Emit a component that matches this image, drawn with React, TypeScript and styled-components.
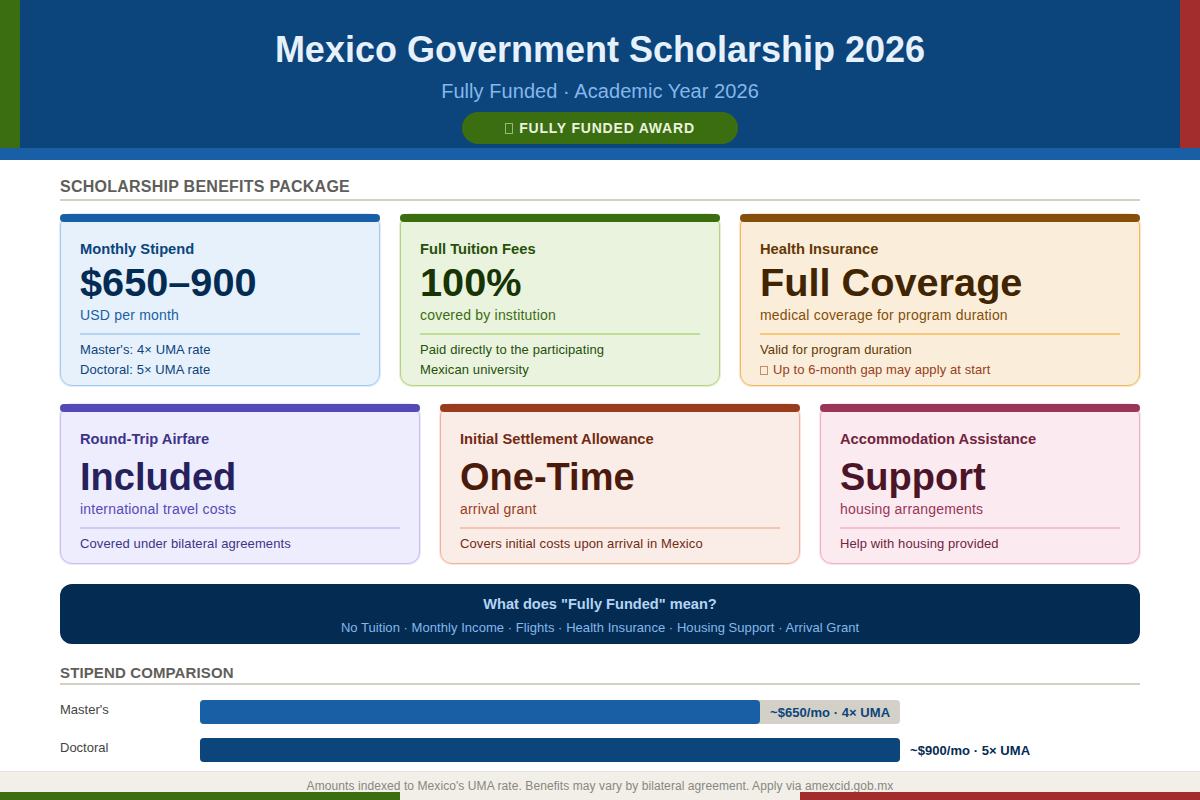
import React from "react";
import styled, { createGlobalStyle } from "styled-components";

const GlobalStyle = createGlobalStyle`
  html, body {
    margin: 0;
    padding: 0;
    background: #ffffff;
  }
  * {
    box-sizing: border-box;
  }
`;

const Page = styled.div`
  position: relative;
  width: 1200px;
  height: 800px;
  overflow: hidden;
  display: flex;
  flex-direction: column;
  background: #ffffff;
  font-family: "Liberation Sans", Arial, sans-serif;
`;

const Header = styled.header`
  display: flex;
  height: 160px;
  flex: none;
  border-bottom: 12px solid #185fa5;
  background: #0c447c;
`;

const FlagStripe = styled.div<{ $color: string }>`
  width: 20px;
  flex: none;
  background: ${props => props.$color};
`;

const HeaderBody = styled.div`
  flex: 1;
  display: flex;
  flex-direction: column;
  align-items: center;
  padding-top: 29px;
`;

const Title = styled.h1`
  margin: 0;
  font-size: 36px;
  line-height: 42px;
  font-weight: 700;
  color: #e6f1fb;
`;

const Subtitle = styled.div`
  margin-top: 6px;
  font-size: 20px;
  line-height: 28px;
  letter-spacing: 0.06px;
  color: #85b7eb;
`;

const AwardPill = styled.div`
  margin-top: 7px;
  width: 276px;
  height: 32px;
  border-radius: 16px;
  background: #3b6d11;
  color: #eaf3de;
  font-size: 14px;
  font-weight: 700;
  letter-spacing: 0.8px;
  display: flex;
  align-items: center;
  justify-content: center;
  gap: 6px;
`;

const MissingGlyph = styled.span<{ $width: number; $height: number }>`
  flex: none;
  display: inline-block;
  width: ${props => props.$width}px;
  height: ${props => props.$height}px;
  border: 1px solid currentColor;
  opacity: 0.55;
`;

const Main = styled.main`
  flex: 1;
  display: flex;
  flex-direction: column;
  padding: 18px 60px 0;
`;

const SectionTitle = styled.h2`
  margin: 0;
  height: 23px;
  border-bottom: 2px solid #d3d1c7;
  font-size: 16px;
  line-height: 18px;
  font-weight: 700;
  letter-spacing: 0.25px;
  text-transform: uppercase;
  color: #5f5e5a;
`;

const CardRow = styled.div<{ $columns: string; $height: number; $top: number }>`
  display: grid;
  grid-template-columns: ${props => props.$columns};
  gap: 20px;
  height: ${props => props.$height}px;
  margin-top: ${props => props.$top}px;
`;

type Tone = {
  bg: string;
  border: string;
  bar: string;
  label: string;
  value: string;
  unit: string;
  rule: string;
  note: string;
};

const blue: Tone = { bg: "#e6f1fb", border: "#a4c9f0", bar: "#185fa5", label: "#0c447c", value: "#042c53", unit: "#185fa5", rule: "#b5d4f4", note: "#0c447c" };
const green: Tone = { bg: "#eaf3de", border: "#b1d382", bar: "#3b6d11", label: "#27500a", value: "#173404", unit: "#3b6d11", rule: "#c0dd97", note: "#27500a" };
const amber: Tone = { bg: "#faeeda", border: "#f3b75d", bar: "#854f0b", label: "#633806", value: "#412402", unit: "#854f0b", rule: "#fac775", note: "#633806" };
const purple: Tone = { bg: "#eeedfe", border: "#c3bff1", bar: "#534ab7", label: "#3c3489", value: "#26215c", unit: "#534ab7", rule: "#cecbf6", note: "#3c3489" };
const coral: Tone = { bg: "#faece7", border: "#f4b29c", bar: "#993c1d", label: "#712b13", value: "#4a1b0c", unit: "#993c1d", rule: "#f5c4b3", note: "#712b13" };
const pink: Tone = { bg: "#fbeaf0", border: "#f2aec5", bar: "#993556", label: "#72243e", value: "#4b1528", unit: "#993556", rule: "#f4c0d1", note: "#72243e" };

const Card = styled.section<{ $tone: Tone }>`
  position: relative;
  display: flex;
  flex-direction: column;
  padding: 25px 19px 0;
  border: 1px solid ${props => props.$tone.border};
  border-radius: 12px;
  box-shadow: 0 0 0 1px ${props => props.$tone.border}55;
  background: ${props => props.$tone.bg};
`;

const CardBar = styled.div<{ $color: string }>`
  position: absolute;
  top: -1px;
  left: -1px;
  right: -1px;
  height: 8px;
  border-radius: 4px;
  background: ${props => props.$color};
`;

const CardLabel = styled.div<{ $color: string }>`
  font-size: 14.7px;
  line-height: 18px;
  font-weight: 700;
  color: ${props => props.$color};
`;

const CardValue = styled.div<{ $color: string; $size: number; $top: number; $bottom: number }>`
  margin: ${props => props.$top}px 0 ${props => props.$bottom}px;
  font-size: ${props => props.$size}px;
  line-height: 44px;
  font-weight: 700;
  color: ${props => props.$color};
`;

const CardUnit = styled.div<{ $color: string }>`
  font-size: 14px;
  line-height: 20px;
  letter-spacing: 0.2px;
  color: ${props => props.$color};
`;

const CardRule = styled.div<{ $color: string }>`
  height: 2px;
  margin: 8px 0 5px;
  background: ${props => props.$color};
`;

const CardNote = styled.div<{ $color: string }>`
  display: flex;
  align-items: center;
  gap: 5px;
  font-size: 13px;
  line-height: 20px;
  letter-spacing: 0.1px;
  color: ${props => props.$color};
`;

const Banner = styled.div`
  flex: none;
  height: 60px;
  margin-top: 20px;
  border-radius: 12px;
  background: #042c53;
  display: flex;
  flex-direction: column;
  align-items: center;
  padding-top: 11px;
`;

const BannerTitle = styled.div`
  font-size: 14.6px;
  line-height: 18px;
  font-weight: 700;
  color: #b5d4f4;
`;

const BannerText = styled.div`
  margin-top: 7px;
  font-size: 13px;
  line-height: 16px;
  letter-spacing: 0.05px;
  color: #85b7eb;
`;

const ComparisonTitle = styled(SectionTitle)`
  margin-top: 20px;
  height: 21px;
  font-size: 15px;
  letter-spacing: 0.13px;
`;

const CompareRow = styled.div<{ $top: number }>`
  display: flex;
  align-items: flex-start;
  margin-top: ${props => props.$top}px;
`;

const CompareName = styled.div`
  width: 140px;
  flex: none;
  font-size: 13px;
  line-height: 20px;
  color: #444441;
`;

const Track = styled.div`
  position: relative;
  width: 700px;
  height: 24px;
  flex: none;
  border-radius: 4px;
  background: #d3d1c7;
`;

const Fill = styled.div<{ $color: string }>`
  height: 100%;
  border-radius: 4px;
  background: ${props => props.$color};
`;

const TrackLabel = styled.div`
  position: absolute;
  top: 0;
  left: 570px;
  font-size: 13px;
  line-height: 25px;
  font-weight: 700;
  letter-spacing: 0.05px;
  white-space: nowrap;
  color: #0c447c;
`;

const OutsideLabel = styled.div`
  margin-left: 10px;
  font-size: 13px;
  line-height: 25px;
  font-weight: 700;
  letter-spacing: 0.05px;
  color: #042c53;
`;

const Footer = styled.footer`
  position: relative;
  flex: none;
  height: 29px;
  border-top: 1px solid #e6e4dc;
  background: #f1efe8;
  display: flex;
  justify-content: center;
  font-size: 12px;
  line-height: 28px;
  letter-spacing: 0.08px;
  color: #888780;
`;

const FooterStripes = styled.div`
  position: absolute;
  left: 0;
  right: 0;
  bottom: 0;
  height: 8px;
  display: grid;
  grid-template-columns: repeat(3, 1fr);
`;

const FooterStripe = styled.div<{ $color: string }>`
  background: ${props => props.$color};
`;

type CardData = {
  tone: Tone;
  label: string;
  value: string;
  unit: string;
  notes: { text: string; color?: string; flagged?: boolean }[];
};

const topCards: CardData[] = [
  {
    tone: blue,
    label: "Monthly Stipend",
    value: "$650–900",
    unit: "USD per month",
    notes: [{ text: "Master's: 4× UMA rate" }, { text: "Doctoral: 5× UMA rate" }],
  },
  {
    tone: green,
    label: "Full Tuition Fees",
    value: "100%",
    unit: "covered by institution",
    notes: [{ text: "Paid directly to the participating" }, { text: "Mexican university" }],
  },
  {
    tone: amber,
    label: "Health Insurance",
    value: "Full Coverage",
    unit: "medical coverage for program duration",
    notes: [
      { text: "Valid for program duration" },
      { text: "Up to 6-month gap may apply at start", color: "#993c1d", flagged: true },
    ],
  },
];

const bottomCards: CardData[] = [
  {
    tone: purple,
    label: "Round-Trip Airfare",
    value: "Included",
    unit: "international travel costs",
    notes: [{ text: "Covered under bilateral agreements" }],
  },
  {
    tone: coral,
    label: "Initial Settlement Allowance",
    value: "One-Time",
    unit: "arrival grant",
    notes: [{ text: "Covers initial costs upon arrival in Mexico" }],
  },
  {
    tone: pink,
    label: "Accommodation Assistance",
    value: "Support",
    unit: "housing arrangements",
    notes: [{ text: "Help with housing provided" }],
  },
];

const BenefitCard = ({ card, size, top, bottom }: { card: CardData; size: number; top: number; bottom: number }) => (
  <Card $tone={card.tone}>
    <CardBar $color={card.tone.bar} />
    <CardLabel $color={card.tone.label}>{card.label}</CardLabel>
    <CardValue $color={card.tone.value} $size={size} $top={top} $bottom={bottom}>
      {card.value}
    </CardValue>
    <CardUnit $color={card.tone.unit}>{card.unit}</CardUnit>
    <CardRule $color={card.tone.rule} />
    {card.notes.map(note => (
      <CardNote key={note.text} $color={note.color ?? card.tone.note}>
        {note.flagged && <MissingGlyph $width={8} $height={9} />}
        {note.text}
      </CardNote>
    ))}
  </Card>
);

export default function App() {
  return (
    <Page>
      <GlobalStyle />
      <Header>
        <FlagStripe $color="#3b6d11" />
        <HeaderBody>
          <Title>Mexico Government Scholarship 2026</Title>
          <Subtitle>Fully Funded · Academic Year 2026</Subtitle>
          <AwardPill>
            <MissingGlyph $width={8} $height={11} />
            FULLY FUNDED AWARD
          </AwardPill>
        </HeaderBody>
        <FlagStripe $color="#a32d2d" />
      </Header>
      <Main>
        <SectionTitle>Scholarship Benefits Package</SectionTitle>
        <CardRow $columns="320px 320px 400px" $height={172} $top={13}>
          {topCards.map(card => (
            <BenefitCard key={card.label} card={card} size={39.7} top={2} bottom={1} />
          ))}
        </CardRow>
        <CardRow $columns="360px 360px 320px" $height={160} $top={18}>
          {bottomCards.map(card => (
            <BenefitCard key={card.label} card={card} size={38} top={7} bottom={0} />
          ))}
        </CardRow>
        <Banner>
          <BannerTitle>What does "Fully Funded" mean?</BannerTitle>
          <BannerText>No Tuition · Monthly Income · Flights · Health Insurance · Housing Support · Arrival Grant</BannerText>
        </Banner>
        <ComparisonTitle>Stipend Comparison</ComparisonTitle>
        <CompareRow $top={15}>
          <CompareName>Master's</CompareName>
          <Track>
            <Fill $color="#185fa5" style={{ width: `${(650 / 812.5) * 100}%` }} />
            <TrackLabel>~$650/mo · 4× UMA</TrackLabel>
          </Track>
        </CompareRow>
        <CompareRow $top={14}>
          <CompareName>Doctoral</CompareName>
          <Track>
            <Fill $color="#0c447c" style={{ width: "100%" }} />
          </Track>
          <OutsideLabel>~$900/mo · 5× UMA</OutsideLabel>
        </CompareRow>
      </Main>
      <Footer>
        Amounts indexed to Mexico's UMA rate. Benefits may vary by bilateral agreement. Apply via amexcid.gob.mx
        <FooterStripes>
          <FooterStripe $color="#3b6d11" />
          <FooterStripe $color="transparent" />
          <FooterStripe $color="#a32d2d" />
        </FooterStripes>
      </Footer>
    </Page>
  );
}
